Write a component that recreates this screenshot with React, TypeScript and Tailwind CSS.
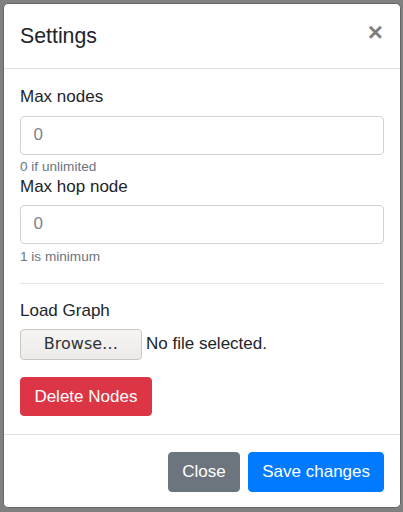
export default function App() {
    return (
        <div className="h-[512px] bg-[#808080] pt-[3px] pl-[3px] font-['Liberation_Sans',Arial,sans-serif] text-[#212529]">
            <div className="w-[398px] bg-white border border-[#666666] rounded-[5px] overflow-hidden">
                <div className="flex items-start justify-between border-b border-[#dee2e6] px-4 pt-[17px] pb-[15px]">
                    <h5 className="text-[21.3px] leading-[31.5px]">Settings</h5>
                    <button className="-mt-[1px] mr-[1px] text-[26px] leading-[25px] font-bold text-black opacity-50 [text-shadow:0_1px_0_#fff]">
                        ×
                    </button>
                </div>

                <div className="px-4 pt-[15px] pb-[18px] text-[17px]">
                    <label className="block leading-[25px] mb-[7px]">Max nodes</label>
                    <input
                        type="number"
                        placeholder="0"
                        className="block w-full h-[39px] px-[12.6px] border border-[#ced4da] rounded-[4px] outline-none placeholder:text-[#7d848b]"
                    />
                    <small className="block mt-[5px] text-[13.6px] leading-[14px] text-[#6c757d]">0 if unlimited</small>

                    <label className="block leading-[25px] mb-[6px]">Max hop node</label>
                    <input
                        type="number"
                        placeholder="0"
                        className="block w-full h-[39px] px-[12.6px] border border-[#ced4da] rounded-[4px] outline-none placeholder:text-[#7d848b]"
                    />
                    <small className="block mt-[3px] text-[13.6px] leading-[20px] text-[#6c757d]">1 is minimum</small>

                    <hr className="mt-4 mb-[14px] border-t border-[#e6e6e6]" />

                    <label className="block leading-[25px] mb-[6px]">Load Graph</label>
                    <div className="flex items-center gap-[4px] h-[31px]">
                        <div className="w-[122px] h-[31px] flex items-center justify-center rounded-[4px] border border-[#cdc7c2] bg-gradient-to-b from-[#f6f5f4] to-[#edebe9] font-['DejaVu_Sans',sans-serif] text-[16px] text-[#2e3436]">
                            Browse…
                        </div>
                        <span>No file selected.</span>
                    </div>

                    <button className="mt-[17px] h-[39px] px-[13.4px] rounded-[4px] border border-[#dc3545] bg-[#dc3545] text-white leading-[25px]">
                        Delete Nodes
                    </button>
                </div>

                <div className="flex justify-end gap-2 border-t border-[#dee2e6] pt-[17px] pr-4 pb-[15px] text-[17px]">
                    <button className="h-[40px] px-[13.5px] rounded-[4px] border border-[#6c757d] bg-[#6c757d] text-white">
                        Close
                    </button>
                    <button className="h-[40px] px-[13px] rounded-[4px] border border-[#007bff] bg-[#007bff] text-white">
                        Save changes
                    </button>
                </div>
            </div>
        </div>
    );
}
